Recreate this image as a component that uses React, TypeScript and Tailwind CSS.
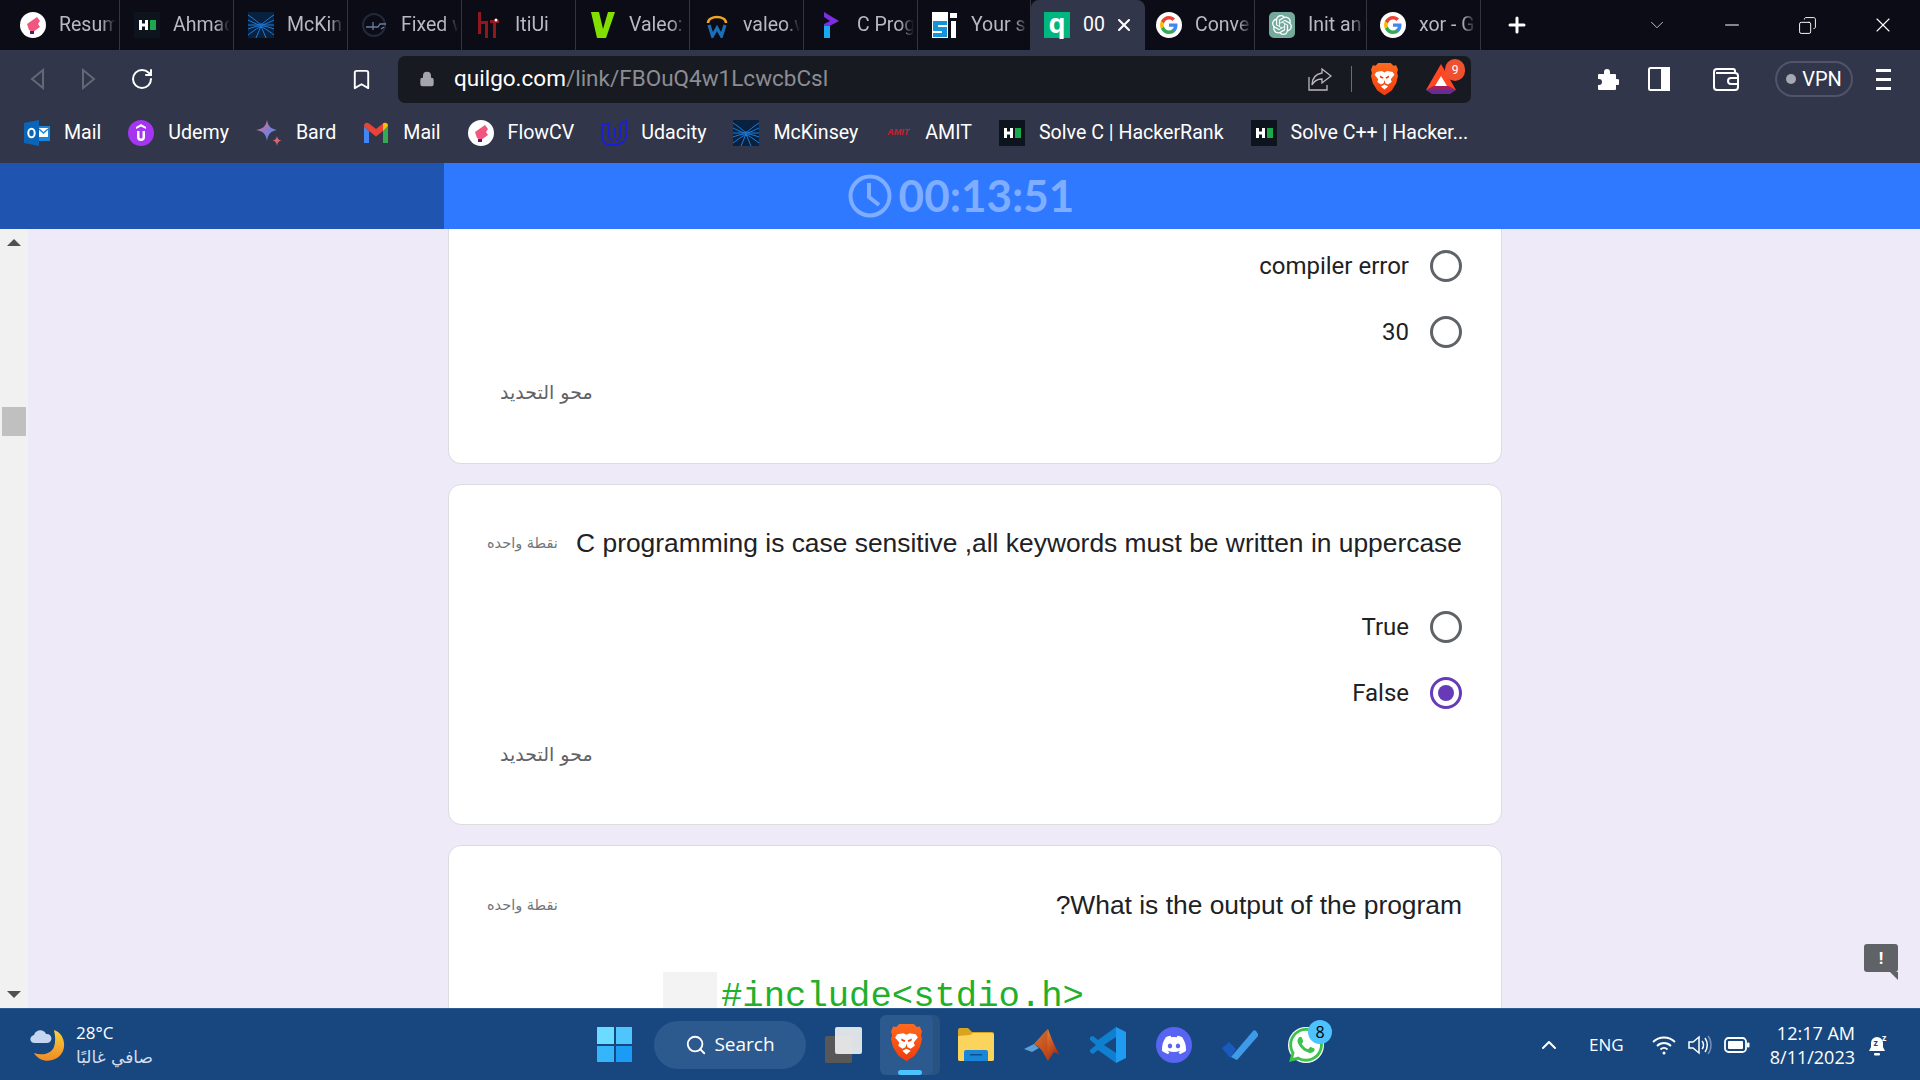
import { ReactNode } from "react";
import { Bookmark, ChevronDown, ChevronUp, Copy, Lock, Minus, Plus, RotateCw, Search, X } from "lucide-react";
import { SiDiscord, SiOpenai, SiWhatsapp } from "react-icons/si";

function Flow() {
  return (
    <svg viewBox="0 0 26 26" className="w-[26px] h-[26px] shrink-0">
      <circle cx="13" cy="13" r="13" fill="#fff" />
      <path d="M7 12 L17 5 L20 9 L18 12 L20 15 L13 20 L9 18 Z" fill="#f2557f" />
      <rect x="10" y="19" width="4" height="3" fill="#4b1d6b" />
    </svg>
  );
}

function Hr() {
  return (
    <svg viewBox="0 0 26 26" className="w-[26px] h-[26px] shrink-0">
      <rect width="26" height="26" fill="#0e141e" />
      <path d="M5 8h3v3.500h3V8h3v10h-3v-3.500H8V18H5z" fill="#fff" />
      <rect x="16" y="8" width="6" height="10" fill="#1ba94c" />
    </svg>
  );
}

function Mck() {
  return (
    <svg viewBox="0 0 26 26" className="w-[26px] h-[26px] shrink-0">
      <rect width="26" height="26" fill="#07213f" />
      <path d="M0 3 C8 8 11 12 13 12 C15 12 18 8 26 3 M0 8 C8 12 11 13 13 13 C15 13 18 12 26 8 M0 13 H26 M0 17 C8 14 11 14 13 14 C15 14 18 14 26 17 M0 23 C8 17 11 15 13 15 C15 15 18 17 26 23 M13 14 L8 26 M13 14 L18 26" stroke="#1f7fe0" strokeWidth="1" fill="none" />
    </svg>
  );
}

function Fixed() {
  return (
    <svg viewBox="0 0 26 26" className="w-[26px] h-[26px] shrink-0" fill="none">
      <circle cx="12" cy="13" r="11" stroke="#23283a" strokeWidth="2" />
      <path d="M4 15h12l2-3h6M11 10v8M19 17l3-2" stroke="#6d7ca6" strokeWidth="1.300" />
    </svg>
  );
}

function Iti() {
  return (
    <svg viewBox="0 0 26 26" className="w-[26px] h-[26px] shrink-0">
      <path d="M2 0h3v9h7v17H9V12H5v10H2zM14 8h9v3h-3v15h-3V11h-3z" fill="#8f1720" />
      <circle cx="20" cy="8" r="1.500" fill="#fff" />
    </svg>
  );
}

function Valeo() {
  return (
    <svg viewBox="0 0 26 26" className="w-[26px] h-[26px] shrink-0">
      <path d="M1 0h8l4 17L18 0h7l-9 26H7z" fill="#82e000" />
    </svg>
  );
}

function Workday() {
  return (
    <svg viewBox="0 0 26 26" className="w-[26px] h-[26px] shrink-0" fill="none">
      <path d="M4 11C4 3 22 3 22 11" stroke="#f2a51f" strokeWidth="2.600" />
      <path d="M5 13l3.500 11 4.500-8 4.500 8L21 13" stroke="#1b6fb8" strokeWidth="3.200" />
    </svg>
  );
}

function Prog() {
  return (
    <svg viewBox="0 0 26 26" className="w-[26px] h-[26px] shrink-0">
      <path d="M6 0l15 9-15 8v-5l6-3-6-4z" fill="#7c2fe0" />
      <path d="M6 14h6v12H6z" fill="#19a7f0" />
    </svg>
  );
}

function Sfi() {
  return (
    <svg viewBox="0 0 26 26" className="w-[26px] h-[26px] shrink-0">
      <rect width="16" height="26" fill="#fff" />
      <path d="M1 9h14v4H6v2h9v10H1v-4h9v-2H1z" fill="#1493d8" />
      <rect x="19" y="9" width="5" height="17" fill="#fff" />
      <rect x="18" y="1" width="7" height="5" fill="#fff" />
    </svg>
  );
}

function Google() {
  return (
    <svg viewBox="0 0 26 26" className="w-[26px] h-[26px] shrink-0">
      <circle cx="13" cy="13" r="13" fill="#fff" />
      <path d="M21.500 13.200c0-.6-.1-1.200-.2-1.800H13v3.400h4.800c-.2 1.100-.8 2-1.800 2.700v2.200h2.900c1.700-1.600 2.600-3.900 2.600-6.500z" fill="#4285f4" />
      <path d="M13 22c2.400 0 4.400-.8 5.900-2.200L16 17.500c-.8.500-1.800.9-3 .9-2.300 0-4.300-1.600-5-3.700H5v2.300C6.500 20 9.500 22 13 22z" fill="#34a853" />
      <path d="M8 14.700c-.4-1.100-.4-2.300 0-3.400V9H5c-1.300 2.500-1.300 5.500 0 8z" fill="#fbbc05" />
      <path d="M13 7.600c1.300 0 2.500.5 3.400 1.300L19 6.400C17.400 4.900 15.300 4 13 4 9.500 4 6.500 6 5 9l3 2.300c.7-2.100 2.700-3.700 5-3.700z" fill="#ea4335" />
    </svg>
  );
}

function Quilgo() {
  return (
    <div className="w-[26px] h-[26px] shrink-0 bg-[#00b67f] flex items-center justify-center text-white text-[27px] font-bold leading-none pb-[6px] font-['Open_Sans',sans-serif]">q</div>
  );
}

function Gpt() {
  return (
    <div className="w-[26px] h-[26px] shrink-0 rounded-[5px] bg-[#74aa9c] flex items-center justify-center text-white">
      <SiOpenai size={20} />
    </div>
  );
}

function BraveLogo({ size = 27 }: { size?: number }) {
  return (
    <svg viewBox="0 0 30 36" width={size} height={(size * 36) / 30} className="shrink-0">
      <defs>
        <linearGradient id="brave" x1="0" y1="0" x2="0" y2="1">
          <stop offset="0" stopColor="#ff6a1f" />
          <stop offset="1" stopColor="#f23b0c" />
        </linearGradient>
      </defs>
      <path d="M8 0h14l3 3 3-.5 2 5-1 3 1 4-2 8-5 8-8 5.500L7 30.500l-5-8-2-8 1-3.500-1-3.500 2-5 3 .5z" fill="url(#brave)" />
      <path d="M6 10l6-1 3 1.500L18 9l6 1 2 3-4 5 1 3-4 3-3-1.500-1-3.500-1 3.500L11 24l-4-3 1-3-4-5z" fill="#fff" />
      <path d="M10 14l4 2-1 1.500-3-1.500zM20 14l-4 2 1 1.500 3-1.500z" fill="#f23b0c" />
      <path d="M11 26l4-2 4 2-4 3.500z" fill="#fff" />
    </svg>
  );
}

function Udemy() {
  return (
    <svg viewBox="0 0 26 26" className="w-[26px] h-[26px] shrink-0">
      <circle cx="13" cy="13" r="13" fill="#a435f0" />
      <path d="M9 11v6a4 4 0 0 0 8 0v-6h-2.500v6a1.500 1.500 0 0 1-3 0v-6zM13 4l5 3v2l-5-2.500L8 9V7z" fill="#fff" />
    </svg>
  );
}

function Outlook() {
  return (
    <svg viewBox="0 0 26 26" className="w-[26px] h-[26px] shrink-0">
      <path d="M10 6h16v15H10z" fill="#1a86d8" />
      <path d="M15 8h9v9h-9z" fill="#fff" />
      <path d="M15 9l4.500 4 4.500-4" stroke="#1a86d8" strokeWidth="1.500" fill="none" />
      <path d="M0 3l15-3v26L0 23z" fill="#0a64b8" />
      <ellipse cx="7.500" cy="13" rx="3.200" ry="4.300" fill="none" stroke="#fff" strokeWidth="2" />
    </svg>
  );
}

function Bard() {
  return (
    <svg viewBox="0 0 26 26" className="w-[26px] h-[26px] shrink-0">
      <defs>
        <linearGradient id="bard" x1="0" y1="0" x2="1" y2="1">
          <stop offset="0" stopColor="#e9746b" />
          <stop offset="0.5" stopColor="#8a79d0" />
          <stop offset="1" stopColor="#3f9ae6" />
        </linearGradient>
      </defs>
      <path d="M11 0c1 6 4 9 10 10-6 1-9 4-10 11C10 14 7 11 0 10c7-1 10-4 11-10z" fill="url(#bard)" />
      <path d="M21 16c.5 2.500 1.500 4 4.500 4.500C22.500 21 21.500 22.500 21 26c-.5-3.500-1.500-5-4.500-5.500 3-.5 4-2 4.500-4.500z" fill="#d96570" />
    </svg>
  );
}

function Gmail() {
  return (
    <svg viewBox="0 0 26 26" className="w-[26px] h-[26px] shrink-0">
      <path d="M1 6v17h5V11z" fill="#4285f4" />
      <path d="M20 11v12h5V6z" fill="#34a853" />
      <path d="M1 6c0-3 3-4 5-2.500L13 9l7-5.500C22 2 25 3 25 6l-5 5-7 5.500L6 11z" fill="#ea4335" />
      <path d="M20 3.500C22 2 25 3 25 6l-5 5z" fill="#fbbc05" />
    </svg>
  );
}

function Udacity() {
  return (
    <svg viewBox="0 0 26 26" className="w-[26px] h-[26px] shrink-0" fill="none" stroke="#1a1ee0" strokeWidth="1.800">
      <path d="M1 5v12c0 5 4 8 11 8 8 0 13-4 13-9V1l-6 3v12c0 3-2 4-4 4" />
      <path d="M8 3v13c0 3 2 4 4 4M8 3L1 5M14 8v10" />
    </svg>
  );
}

function Amit() {
  return (
    <div className="w-[26px] h-[26px] shrink-0 flex items-center justify-center text-[9px] font-bold italic text-[#c8232c] font-['Liberation_Sans',sans-serif]">AMIT</div>
  );
}

function Bat() {
  return (
    <svg viewBox="0 0 30 30" className="w-[30px] h-[30px]">
      <path d="M15 0L30 26H0z" fill="#ff4724" />
      <path d="M0 26h30l-6 4H6z" fill="#662d91" />
      <path d="M0 26l7.500-4h15L30 26z" fill="#9e1f63" />
      <path d="M15 12l6 10H9z" fill="#fff" />
    </svg>
  );
}

function WeatherIcon() {
  return (
    <svg viewBox="0 0 36 34" className="w-[36px] h-[34px] shrink-0">
      <defs>
        <linearGradient id="moon" x1="0" y1="0" x2="0" y2="1">
          <stop offset="0" stopColor="#f8d23c" />
          <stop offset="1" stopColor="#f08a24" />
        </linearGradient>
      </defs>
      <path d="M25 2c9 3 12 13 9 21-4 9-15 12-23 8-3-2-5-4-6-6 8 3 17 1 20-6 2-6 1-12 0-17z" fill="url(#moon)" />
      <path d="M6 15c-6 0-6-7-1-8 2-6 10-6 12-1 6-1 8 8 1 9z" fill="#c5d6f2" />
    </svg>
  );
}

function WinLogo() {
  return (
    <div className="grid grid-cols-2 gap-[2px] w-[35px] h-[35px] shrink-0">
      <div className="bg-[#6bdcff]" />
      <div className="bg-[#4fc6fb]" />
      <div className="bg-[#35b6fb]" />
      <div className="bg-[#1a9bf5]" />
    </div>
  );
}

function TaskView() {
  return (
    <div className="relative w-[37px] h-[36px] shrink-0">
      <div className="absolute left-0 bottom-0 w-[27px] h-[27px] bg-[#585858] rounded-[2px]" />
      <div className="absolute right-0 top-0 w-[27px] h-[27px] bg-[#f2f2f2]/90 rounded-[2px]" />
    </div>
  );
}

function Folder() {
  return (
    <svg viewBox="0 0 36 33" className="w-[36px] h-[33px] block">
      <path d="M0 2a2 2 0 0 1 2-2h8l4 4h20a2 2 0 0 1 2 2v25a2 2 0 0 1-2 2H2a2 2 0 0 1-2-2z" fill="#d9a520" />
      <path d="M0 8l12-1 3-2h19a2 2 0 0 1 2 2v24a2 2 0 0 1-2 2H2a2 2 0 0 1-2-2z" fill="#fad45c" />
      <path d="M6 24a2 2 0 0 1 2-2h20a2 2 0 0 1 2 2v9H6z" fill="#1a86d8" />
      <rect x="12" y="26" width="12" height="1.500" fill="#0b4f8f" />
    </svg>
  );
}

function Matlab() {
  return (
    <svg viewBox="0 0 36 32" className="w-[36px] h-[32px] block">
      <defs>
        <linearGradient id="ml" x1="0" y1="0" x2="1" y2="1">
          <stop offset="0" stopColor="#f7b24a" />
          <stop offset="0.6" stopColor="#c9501e" />
          <stop offset="1" stopColor="#7d1f10" />
        </linearGradient>
      </defs>
      <path d="M0 20l10-5 5 4-7 4z" fill="#5a9fd6" />
      <path d="M10 15L20 4l4-4c3 8 7 19 12 26l-6-3-6 9-4-7c-2-4-5-8-10-10z" fill="url(#ml)" />
      <path d="M24 0c-1 8-1 16 0 32l-4-7c-2-4-5-8-10-10L20 4z" fill="#b9431a" opacity="0.55" />
    </svg>
  );
}

function VsCode() {
  return (
    <svg viewBox="0 0 36 36" className="w-[36px] h-[36px] block">
      <path d="M26 0l10 5v26l-10 5z" fill="#1f9cf0" />
      <path d="M26 0v10L14 18l12 8v10L8 23l-5 4-3-2v-2l6-5-6-5v-3l3-1 5 4z" fill="#0f7fd0" />
    </svg>
  );
}

function ToDo() {
  return (
    <svg viewBox="0 0 36 30" className="w-[36px] h-[30px] block">
      <path d="M0 18l7-6 7 7-5 8a2 2 0 0 1-2 0z" fill="#195abd" />
      <path d="M9 27L31 1a2 2 0 0 1 3 0l2 3a2 2 0 0 1 0 2L16 29a2 2 0 0 1-3 0z" fill="#3f9be8" />
    </svg>
  );
}

function Tab({ icon, label, active, w = "w-[114px]", pl = "pl-[14px]" }: { icon: ReactNode; label: string; active?: boolean; w?: string; pl?: string }) {
  if (active) {
    return (
      <div className="w-[114px] h-[50px] bg-[#32364a] rounded-t-[8px] flex items-center pl-[13px] text-white">
        {icon}
        <span className="ml-[13px] w-[22px] overflow-hidden text-[19.500px] leading-none">{label}</span>
        <X size={20} strokeWidth={2.500} className="ml-[9px]" />
      </div>
    );
  }
  return (
    <div className={`${w} ${pl} h-[50px] flex items-center border-r border-[#33363f] text-[#b9bac0]`}>
      {icon}
      <span className="ml-[13px] w-[57px] overflow-hidden whitespace-nowrap text-[19.500px] leading-none [mask-image:linear-gradient(to_right,black_75%,transparent)]">{label}</span>
    </div>
  );
}

function Mark({ icon, label }: { icon: ReactNode; label: string }) {
  return (
    <div className="flex items-center gap-[14px] text-white text-[19.600px] whitespace-nowrap">
      {icon}
      <span>{label}</span>
    </div>
  );
}

function Radio({ label, checked }: { label: string; checked?: boolean }) {
  return (
    <div className="h-[66px] flex items-center justify-end gap-[21px]">
      <span className="text-[24px] text-[#202124] font-['Roboto',sans-serif]">{label}</span>
      {checked ? (
        <div className="w-[32px] h-[32px] rounded-full border-[3px] border-[#673ab7] flex items-center justify-center">
          <div className="w-[16px] h-[16px] rounded-full bg-[#673ab7]" />
        </div>
      ) : (
        <div className="w-[32px] h-[32px] rounded-full border-[3px] border-[#5f6368]" />
      )}
    </div>
  );
}

function Question({ text }: { text: string }) {
  return (
    <div className="h-[40px] flex items-center justify-between">
      <span className="text-[14.500px] text-[#70757a] font-['DejaVu_Sans',sans-serif]">نقطة واحده</span>
      <span className="text-[26.400px] text-[#202124] font-['Liberation_Sans',sans-serif]">{text}</span>
    </div>
  );
}

function Clear({ className }: { className: string }) {
  return (
    <div className={`h-[30px] flex items-center pl-[13px] text-[19px] text-[#5f6368] font-['DejaVu_Sans',sans-serif] ${className}`}>محو التحديد</div>
  );
}

function Card({ children, className }: { children: ReactNode; className: string }) {
  return (
    <div className={`bg-white border border-[#dadce0] rounded-[13px] pl-[38px] pr-[39px] ${className}`}>{children}</div>
  );
}

export default function App() {
  return (
    <div className="w-[1920px] h-[1080px] overflow-hidden flex flex-col font-['Roboto',sans-serif]">
      {/* tab strip */}
      <div className="h-[50px] shrink-0 bg-[#0b0c16] flex items-center pl-[6px]">
        <Tab icon={<Flow />} label="Resume" />
        <Tab icon={<Hr />} label="Ahmad" />
        <Tab icon={<Mck />} label="McKinsey" />
        <Tab icon={<Fixed />} label="Fixed w" />
        <Tab icon={<Iti />} label="ItiUi" />
        <Tab icon={<Valeo />} label="Valeo:" />
        <Tab icon={<Workday />} label="valeo.w" />
        <Tab icon={<Prog />} label="C Prog" />
        <Tab icon={<Sfi />} label="Your s" w="w-[113px]" />
        <Tab icon={<Quilgo />} label="00" active />
        <Tab icon={<Google />} label="Conve" w="w-[110px]" pl="pl-[11px]" />
        <Tab icon={<Gpt />} label="Init an" w="w-[112px]" />
        <Tab icon={<Google />} label="xor - G" pl="pl-[13px]" />
        <Plus size={24} strokeWidth={3} className="text-white ml-[24px]" />
        <ChevronDown size={22} strokeWidth={1} className="text-[#d0d0d0] ml-[117px]" />
        <Minus size={22} strokeWidth={1.200} className="text-white ml-[53px]" />
        <Copy size={19} strokeWidth={1.200} className="text-white ml-[55px] -scale-x-100" />
        <X size={24} strokeWidth={1.100} className="text-white ml-[54px]" />
      </div>

      {/* toolbar */}
      <div className="h-[53px] shrink-0 bg-[#32364a] flex items-center pt-[5px]">
        <svg viewBox="0 0 16 22" className="w-[16px] h-[22px] ml-[29px]" fill="none" stroke="#646875" strokeWidth="2"><path d="M14 2L3 11l11 9z" /></svg>
        <svg viewBox="0 0 16 22" className="w-[16px] h-[22px] ml-[36px]" fill="none" stroke="#646875" strokeWidth="2"><path d="M2 2l11 9-11 9z" /></svg>
        <RotateCw size={24} strokeWidth={2} className="text-white ml-[33px]" />
        <Bookmark size={23} strokeWidth={2} className="text-white ml-[196px]" />
        <div className="ml-[25px] w-[1073px] h-[47px] bg-[#181a21] rounded-[7px] flex items-center pl-[21px]">
          <Lock size={16} fill="#a4a5aa" strokeWidth={2} className="text-[#a4a5aa]" />
          <span className="ml-[19px] text-[22.500px] text-white">quilgo.com<span className="text-[#8c8d92]">/link/FBOuQ4w1LcwcbCsl</span></span>
          <svg viewBox="0 0 24 24" className="w-[24px] h-[24px] ml-auto" fill="none" stroke="#b8b9bd" strokeWidth="1.300"><path d="M1 10v13h18v-5" /><path d="M14 2l9 7-9 7v-4c-5 0-8 2-10 6 0-7 4-11 10-12z" /></svg>
          <div className="w-px h-[26px] bg-[#6b6d75] ml-[19px]" />
          <div className="ml-[19px]"><BraveLogo /></div>
          <div className="relative ml-[28px] mr-[15px]">
            <Bat />
            <div className="absolute -top-[5px] -right-[9px] w-[20px] h-[22px] rounded-full bg-[#ef5130] text-white text-[12px] flex items-center justify-center">9</div>
          </div>
        </div>
        <svg viewBox="0 0 24 24" className="w-[24px] h-[24px] ml-[124px]" fill="#fff"><path d="M9 5a3 3 0 0 1 6 0v2h5a1 1 0 0 1 1 1v4h1a3 3 0 0 1 0 6h-1v4a1 1 0 0 1-1 1H4a1 1 0 0 1-1-1v-4h1a3 3 0 0 0 0-6H3V8a1 1 0 0 1 1-1h5z" /></svg>
        <svg viewBox="0 0 22 24" className="w-[22px] h-[24px] ml-[29px]" fill="none" stroke="#fff" strokeWidth="2"><rect x="1" y="1" width="20" height="22" rx="1.500" /><rect x="14" y="1" width="7" height="22" fill="#fff" /></svg>
        <svg viewBox="0 0 26 24" className="w-[26px] h-[24px] ml-[43px]" fill="none" stroke="#fff" strokeWidth="2"><path d="M3 6h19a3 3 0 0 1 3 3v11a3 3 0 0 1-3 3H4a3 3 0 0 1-3-3V5a3 3 0 0 1 3-3h16a2 2 0 0 1 2 2v2" /><path d="M25 11h-7a3 3 0 0 0 0 6h7" /></svg>
        <div className="ml-[36px] w-[78px] h-[36px] rounded-full border-2 border-[#50536a] flex items-center justify-center gap-[6px] text-white text-[20px]">
          <div className="w-[10px] h-[10px] rounded-full bg-[#a6a8b4]" />
          VPN
        </div>
        <div className="ml-[23px] w-[15px] flex flex-col gap-[6px]">
          <div className="h-[3px] bg-white" />
          <div className="h-[3px] bg-white" />
          <div className="h-[3px] bg-white" />
        </div>
      </div>

      {/* bookmarks */}
      <div className="h-[60px] shrink-0 bg-[#32364a] flex items-center pl-[24px] gap-[27px]">
        <Mark icon={<Outlook />} label="Mail" />
        <Mark icon={<Udemy />} label="Udemy" />
        <Mark icon={<Bard />} label="Bard" />
        <Mark icon={<Gmail />} label="Mail" />
        <Mark icon={<Flow />} label="FlowCV" />
        <Mark icon={<Udacity />} label="Udacity" />
        <Mark icon={<Mck />} label="McKinsey" />
        <Mark icon={<Amit />} label="AMIT" />
        <Mark icon={<Hr />} label="Solve C | HackerRank" />
        <Mark icon={<Hr />} label="Solve C++ | Hacker..." />
      </div>

      {/* timer bar */}
      <div className="relative h-[66px] shrink-0 bg-[#2e79ff]">
        <div className="w-[444px] h-full bg-[#1f55b1]" />
        <div className="absolute inset-0 flex items-center justify-center gap-[7px] pl-[2px] pb-[2px] text-[#7fadff] font-['Lato',sans-serif] font-bold text-[44px]">
          <svg viewBox="0 0 44 44" className="w-[44px] h-[44px] mt-[2px]" fill="none" stroke="currentColor" strokeWidth="4"><circle cx="22" cy="22" r="19.500" /><path d="M21 9v14l10 8" /></svg>
          00:13:51
        </div>
      </div>

      {/* page */}
      <div className="relative flex-1 min-h-0 flex bg-[#eeeaf8] overflow-hidden">
        <div className="w-[28px] shrink-0 bg-[#f1f1f1] flex flex-col items-center justify-between py-[10px]">
          <div className="w-0 h-0 border-x-[7px] border-x-transparent border-b-[7px] border-b-[#505050]" />
          <div className="w-0 h-0 border-x-[7px] border-x-transparent border-t-[7px] border-t-[#505050]" />
        </div>
        <div className="absolute left-[2px] top-[178px] w-[24px] h-[29px] bg-[#c0c0c0]" />

        <div className="ml-[420px] w-[1054px] flex flex-col gap-[20px]">
          <Card className="pt-[4px] pb-[56px] rounded-t-none border-t-0">
            <Radio label="compiler error" />
            <Radio label="30" />
            <Clear className="mt-[12px]" />
          </Card>
          <Card className="pt-[39px] pb-[55px]">
            <Question text="C programming is case sensitive ,all keywords must be written in uppercase" />
            <div className="mt-[30px]">
              <Radio label="True" />
              <Radio label="False" checked />
            </div>
            <Clear className="mt-[13px]" />
          </Card>
          <Card className="pt-[40px] shrink-0 h-[300px]">
            <Question text="?What is the output of the program" />
            <div className="mt-[46px] ml-[176px] flex">
              <div className="w-[54px] h-[36px] bg-[#f3f3f3]" />
              <span className="ml-[4px] mt-[3px] text-[35.600px] leading-[44px] text-[#22b02c] font-['Liberation_Mono',monospace] whitespace-nowrap">#include&lt;stdio.h&gt;</span>
            </div>
          </Card>
        </div>

        <div className="absolute right-[22px] top-[715px] w-[34px] h-[28px] bg-[#5f6368] rounded-[3px] text-white text-[17px] font-bold flex items-center justify-center leading-none">!</div>
        <div className="absolute right-[22px] top-[743px] w-0 h-0 border-l-[8px] border-l-transparent border-t-[8px] border-t-[#5f6368]" />
      </div>

      {/* taskbar */}
      <div className="h-[72px] shrink-0 bg-[#18477f] border-t border-[#2f5c90] flex items-center text-white font-['Open_Sans',sans-serif]">
        <div className="ml-[29px]"><WeatherIcon /></div>
        <div className="ml-[11px] w-[60px] flex flex-col items-start text-[17px] leading-[24px]">
          <span>28°C</span>
          <span className="text-[#d4dded] font-['DejaVu_Sans',sans-serif] text-[17px] whitespace-nowrap">صافي غالبًا</span>
        </div>
        <div className="ml-[461px]"><WinLogo /></div>
        <div className="ml-[22px] w-[152px] h-[48px] rounded-full bg-[#2d5a8e] flex items-center justify-center gap-[7px] text-[19px]">
          <Search size={22} strokeWidth={2} />
          Search
        </div>
        <div className="ml-[19px]"><TaskView /></div>
        <div className="ml-[18px] relative w-[60px] h-[60px]">
          <div className="absolute right-0 top-0 w-[20px] h-[60px] rounded-[6px] bg-[#28527f]" />
          <div className="absolute left-0 top-0 w-[53px] h-[60px] rounded-[6px] bg-[#2d5a8e] flex items-center justify-center pb-[4px]">
            <BraveLogo size={31} />
          </div>
          <div className="absolute bottom-0 left-[18px] w-[24px] h-[5px] rounded-full bg-[#4cc2ff]" />
        </div>
        <div className="ml-[18px]"><Folder /></div>
        <div className="ml-[30px]"><Matlab /></div>
        <div className="ml-[30px]"><VsCode /></div>
        <div className="ml-[30px] w-[36px] h-[36px] rounded-full bg-[#5865f2] flex items-center justify-center"><SiDiscord size={24} /></div>
        <div className="ml-[30px]"><ToDo /></div>
        <div className="ml-[30px] relative w-[36px] h-[36px] rounded-full bg-white flex items-center justify-center text-[#3bc34a]">
          <SiWhatsapp size={34} />
          <div className="absolute -top-[7px] -right-[8px] w-[24px] h-[24px] rounded-full bg-[#4cc2ff] text-black text-[16px] flex items-center justify-center">8</div>
        </div>
        <ChevronUp size={24} strokeWidth={2} className="ml-[213px]" />
        <span className="ml-[28px] text-[17px]">ENG</span>
        <svg viewBox="0 0 24 20" className="w-[24px] h-[20px] ml-[28px]" fill="none" stroke="#fff" strokeWidth="1.800"><path d="M1 7c6-6 16-6 22 0M5 11c4-4 10-4 14 0M8.500 14.500c2-2 5-2 7 0" /><circle cx="12" cy="18" r="1.500" fill="#fff" stroke="none" /></svg>
        <svg viewBox="0 0 24 20" className="w-[24px] h-[20px] ml-[12px]" fill="none" stroke="#fff" strokeWidth="1.500"><path d="M1 7h4l6-5v16l-6-5H1z" /><path d="M14 6c2 2 2 6 0 8M17 3c3 4 3 10 0 14" /><path d="M20 1c4 5 4 13 0 18" stroke="#6f8fb5" /></svg>
        <svg viewBox="0 0 26 16" className="w-[26px] h-[16px] ml-[12px]" fill="none" stroke="#fff" strokeWidth="1.800"><rect x="1" y="1" width="21" height="14" rx="3.500" /><rect x="4" y="4" width="15" height="8" rx="1" fill="#fff" stroke="none" /><rect x="23" y="5.500" width="2.500" height="5" rx="1" fill="#fff" stroke="none" /></svg>
        <div className="ml-auto flex flex-col items-end text-[18px] leading-[24px]">
          <span>12:17 AM</span>
          <span>8/11/2023</span>
        </div>
        <svg viewBox="0 0 22 22" className="w-[22px] h-[22px] ml-[13px] mr-[30px]" fill="#fff"><path d="M9 3a6 6 0 0 0-6 6v4l-2 4h16l-2-4V9a6 6 0 0 0-6-6z" /><rect x="6" y="19" width="6" height="2.500" rx="1" /><text x="5.500" y="12" fontSize="9" fontWeight="700" fill="#18477f">z</text><text x="14" y="7" fontSize="9" fontWeight="700">z</text></svg>
      </div>
    </div>
  );
}
